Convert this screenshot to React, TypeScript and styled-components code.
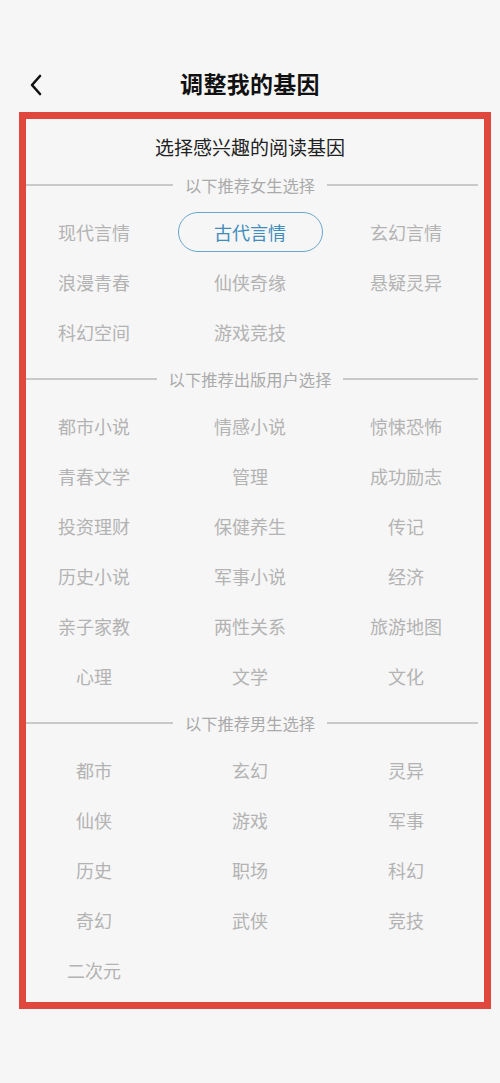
import React, { useState } from "react";
import styled, { createGlobalStyle } from "styled-components";

const GlobalStyle = createGlobalStyle`
  html, body {
    margin: 0;
    padding: 0;
    background: #f6f6f6;
  }
  body {
    font-family: "Noto Sans CJK SC", "Noto Sans", sans-serif;
  }
`;

const Page = styled.div`
  position: relative;
  width: 500px;
  min-height: 1083px;
  background: #f6f6f6;
  padding-top: 50px;
  box-sizing: border-box;
`;

const Header = styled.div`
  display: flex;
  align-items: center;
  justify-content: center;
  position: relative;
  height: 62px;
  padding-top: 4px;
  box-sizing: border-box;
`;

const BackButton = styled.button`
  position: absolute;
  left: 24px;
  top: 20px;
  width: 24px;
  height: 30px;
  padding: 0;
  border: none;
  background: none;
  display: flex;
  align-items: center;
  justify-content: center;
`;

const Title = styled.h1`
  margin: 0;
  font-size: 23px;
  font-weight: 700;
  color: #111;
  letter-spacing: 0.3px;
`;

const Content = styled.div`
  padding: 0 22px 0;
`;

const Subtitle = styled.div`
  text-align: center;
  font-size: 19px;
  color: #222;
  line-height: 24px;
  margin-top: 23px;
  margin-bottom: 14px;
`;

const Divider = styled.div`
  display: flex;
  align-items: center;
  gap: 12px;
  height: 24px;
  font-size: 16.3px;
  color: #aaaaaa;
  white-space: nowrap;

  &::before,
  &::after {
    content: "";
    flex: 1;
    height: 1.5px;
    background: #c9c9c9;
  }
`;

const Grid = styled.div`
  display: grid;
  grid-template-columns: repeat(3, 156px);
  grid-auto-rows: 50px;
  justify-content: center;
  margin: 10px -6px 10px;
`;

const Tag = styled.button<{ $active?: boolean }>`
  justify-self: center;
  align-self: center;
  width: ${(p) => (p.$active ? "145px" : "auto")};
  height: 40px;
  padding: 0;
  border-radius: 20px;
  border: ${(p) => (p.$active ? "1.5px solid #69a7cc" : "1.5px solid transparent")};
  background: none;
  font-family: inherit;
  font-size: 18px;
  color: ${(p) => (p.$active ? "#3f8dbd" : "#b3b3b3")};
  cursor: pointer;
`;

const Annotation = styled.div`
  position: absolute;
  left: 19px;
  top: 112px;
  width: 472px;
  height: 897px;
  border: 7px solid #e0483e;
  box-sizing: border-box;
  pointer-events: none;
`;

const sections = [
  {
    label: "以下推荐女生选择",
    tags: ["现代言情", "古代言情", "玄幻言情", "浪漫青春", "仙侠奇缘", "悬疑灵异", "科幻空间", "游戏竞技"],
  },
  {
    label: "以下推荐出版用户选择",
    tags: [
      "都市小说", "情感小说", "惊悚恐怖",
      "青春文学", "管理", "成功励志",
      "投资理财", "保健养生", "传记",
      "历史小说", "军事小说", "经济",
      "亲子家教", "两性关系", "旅游地图",
      "心理", "文学", "文化",
    ],
  },
  {
    label: "以下推荐男生选择",
    tags: ["都市", "玄幻", "灵异", "仙侠", "游戏", "军事", "历史", "职场", "科幻", "奇幻", "武侠", "竞技", "二次元"],
  },
];

const BackIcon = () => (
  <svg width="14" height="24" viewBox="0 0 14 24" fill="none">
    <path d="M11 3 L3 12 L11 21" stroke="#111" strokeWidth="2.6" strokeLinecap="round" strokeLinejoin="round" />
  </svg>
);

const App: React.FC = () => {
  const [selected, setSelected] = useState<string[]>(["古代言情"]);

  const toggle = (tag: string) => {
    setSelected((curr) => (curr.includes(tag) ? curr.filter((t) => t !== tag) : [...curr, tag]));
  };

  return (
    <>
      <GlobalStyle />
      <Page>
        <Header>
          <BackButton>
            <BackIcon />
          </BackButton>
          <Title>调整我的基因</Title>
        </Header>
        <Content>
          <Subtitle>选择感兴趣的阅读基因</Subtitle>
          {sections.map((section) => (
            <React.Fragment key={section.label}>
              <Divider>{section.label}</Divider>
              <Grid>
                {section.tags.map((tag) => (
                  <Tag key={tag} $active={selected.includes(tag)} onClick={() => toggle(tag)}>
                    {tag}
                  </Tag>
                ))}
              </Grid>
            </React.Fragment>
          ))}
        </Content>
        <Annotation />
      </Page>
    </>
  );
};

export default App;
